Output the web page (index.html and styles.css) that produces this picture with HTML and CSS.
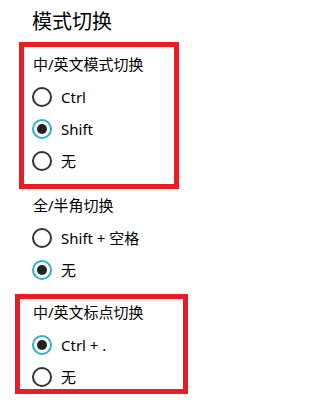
FILE: index.html
```html
<!DOCTYPE html>
<html lang="zh-CN">
<head>
<meta charset="utf-8">
<title>模式切换</title>
<link rel="stylesheet" href="styles.css">
</head>
<body>
<div class="page">
  <h1 class="title">模式切换</h1>

  <section class="group box box-a">
    <div class="subtitle">中/英文模式切换</div>
    <div class="option"><span class="radio"></span><span class="label">Ctrl</span></div>
    <div class="option"><span class="radio checked"></span><span class="label">Shift</span></div>
    <div class="option"><span class="radio"></span><span class="label">无</span></div>
  </section>

  <section class="group plain">
    <div class="subtitle">全/半角切换</div>
    <div class="option"><span class="radio"></span><span class="label">Shift + 空格</span></div>
    <div class="option"><span class="radio checked"></span><span class="label">无</span></div>
  </section>

  <section class="group box box-c">
    <div class="subtitle">中/英文标点切换</div>
    <div class="option"><span class="radio checked"></span><span class="label">Ctrl + .</span></div>
    <div class="option"><span class="radio"></span><span class="label">无</span></div>
  </section>
</div>
</body>
</html>
```

FILE: styles.css
```css
html, body {
  margin: 0;
  padding: 0;
  background: #ffffff;
}

.page {
  font-family: "Noto Sans", "Noto Sans CJK SC", sans-serif;
  color: #000000;
  width: 202px;
  height: 410px;
  overflow: hidden;
}

.title {
  margin: 0;
  padding: 8px 0 0 32px;
  font-size: 20px;
  font-weight: 400;
  line-height: 28px;
  height: 34px;
}

.group {
  display: flex;
  flex-direction: column;
}

.subtitle {
  font-size: 15px;
  line-height: 20px;
  height: 20px;
  padding-left: 1px;
}

.option {
  display: flex;
  align-items: center;
  gap: 9px;
  height: 20px;
  margin-top: 12px;
  font-size: 15px;
  line-height: 20px;
}

.subtitle + .option {
  margin-top: 13px;
}

.radio {
  box-sizing: border-box;
  width: 20px;
  height: 20px;
  border-radius: 50%;
  border: 2px solid #333333;
  display: flex;
  align-items: center;
  justify-content: center;
  flex: none;
}

.radio.checked {
  border-color: #2fafc9;
}

.radio.checked::after {
  content: "";
  width: 10px;
  height: 10px;
  border-radius: 50%;
  background: #222222;
}

.box {
  border: 5px solid #ec1c24;
  box-sizing: border-box;
}

.box-a {
  margin-left: 19px;
  width: 160px;
  height: 147px;
  padding: 7px 0 0 8px;
}

.plain {
  padding: 6px 0 0 32px;
  height: 105px;
  box-sizing: border-box;
}

.box-c {
  margin-left: 15px;
  width: 173px;
  height: 100px;
  padding: 3px 0 0 12px;
}
```
